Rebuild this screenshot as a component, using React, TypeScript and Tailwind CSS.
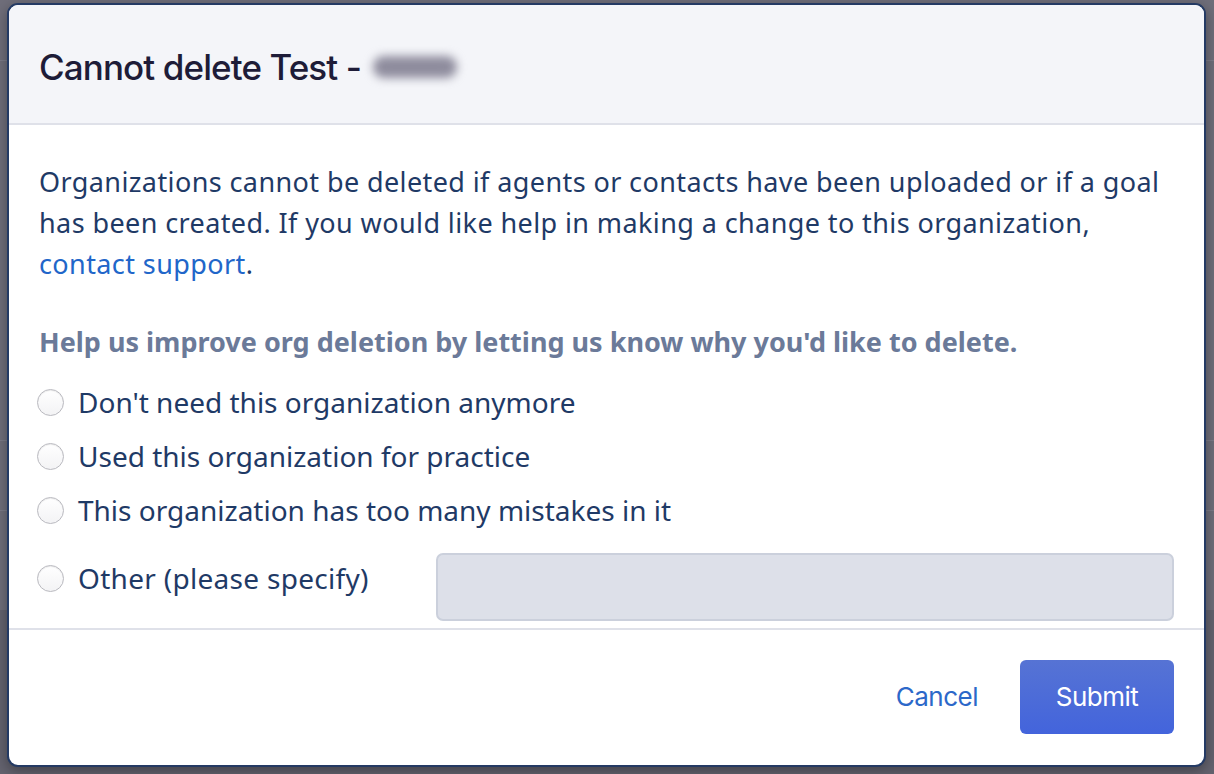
import React from "react";

const reasons = [
  "Don't need this organization anymore",
  "Used this organization for practice",
  "This organization has too many mistakes in it",
];

function Radio() {
  return (
    <span className="shrink-0 w-[27px] h-[27px] rounded-full border border-[#b9b9bf] bg-gradient-to-b from-[#ffffff] to-[#f3f3f5] shadow-[inset_0_1px_1px_rgba(0,0,0,0.08)]" />
  );
}

export default function App() {
  return (
    <div className="relative w-[1214px] h-[774px] overflow-hidden bg-[#6f6e7a] pl-[7px] pt-[3px]">
      {/* dimmed page behind the modal */}
      <div className="absolute left-0 right-0 top-[60px] h-px bg-[#7c7b88]" />
      <div className="absolute left-0 right-0 top-[440px] h-px bg-[#7c7b88]" />
      <div className="absolute left-0 right-0 top-[510px] h-px bg-[#7c7b88]" />
      <div className="absolute left-0 right-0 top-[610px] bottom-0 bg-[#64636f]" />

      <div className="relative flex flex-col w-[1199px] h-[764px] bg-white border-2 border-[#243a64] rounded-[11px] overflow-hidden shadow-[0_4px_14px_rgba(0,0,0,0.35)]">
        <div className="flex items-center h-[120px] shrink-0 bg-[#f4f5f9] border-b-2 border-[#dfe1e9] px-[30px] pt-[6px]">
          <h1 className="font-['Inter',sans-serif] text-[35px] font-medium tracking-[-0.9px] text-[#1e1c38] flex items-center">
            Cannot delete Test -
            <span className="ml-[12px] inline-block w-[84px] h-[22px] rounded-full bg-[#8e8c9d] blur-[5px]" />
          </h1>
        </div>

        <div className="flex-1 px-[30px] pt-[36px] font-['Lato','Noto Sans',sans-serif] text-[#1f3a66]">
          <p className="text-[27px] leading-[41px] tracking-[0.4px] whitespace-nowrap">
            Organizations cannot be deleted if agents or contacts have been uploaded or if a goal
            <br />
            has been created. If you would like help in making a change to this organization,
            <br />
            <a className="text-[#2166c9]">contact support</a>.
          </p>

          <p className="mt-[38px] text-[27px] font-bold text-[#6b7a99]">
            Help us improve org deletion by letting us know why you'd like to delete.
          </p>

          <div className="mt-[24px] flex flex-col gap-[23px]">
            {reasons.map((r) => (
              <label key={r} className="flex items-center gap-[14px] -ml-[2px] h-[31px] text-[28px]">
                <Radio />
                {r}
              </label>
            ))}
            <div className="flex items-start -ml-[2px] mt-[4px]">
              <label className="flex items-center gap-[14px] w-[399px] h-[31px] mt-[10px] text-[28px] tracking-[0.3px]">
                <Radio />
                Other (please specify)
              </label>
              <div className="flex-1 h-[68px] rounded-[7px] bg-[#dde0e9] border-2 border-[#cbd0dc]" />
            </div>
          </div>
        </div>

        <div className="shrink-0 h-[137px] border-t-2 border-[#dfe1e9] flex items-center justify-end gap-[42px] pr-[30px] pb-[2px] font-['Inter',sans-serif]">
          <button className="text-[26px] text-[#2c68c9] tracking-[-0.5px]">Cancel</button>
          <button className="w-[154px] h-[74px] rounded-[6px] bg-gradient-to-b from-[#5673d4] to-[#4364dc] text-white text-[26px] tracking-[-0.5px]">
            Submit
          </button>
        </div>
      </div>
    </div>
  );
}
